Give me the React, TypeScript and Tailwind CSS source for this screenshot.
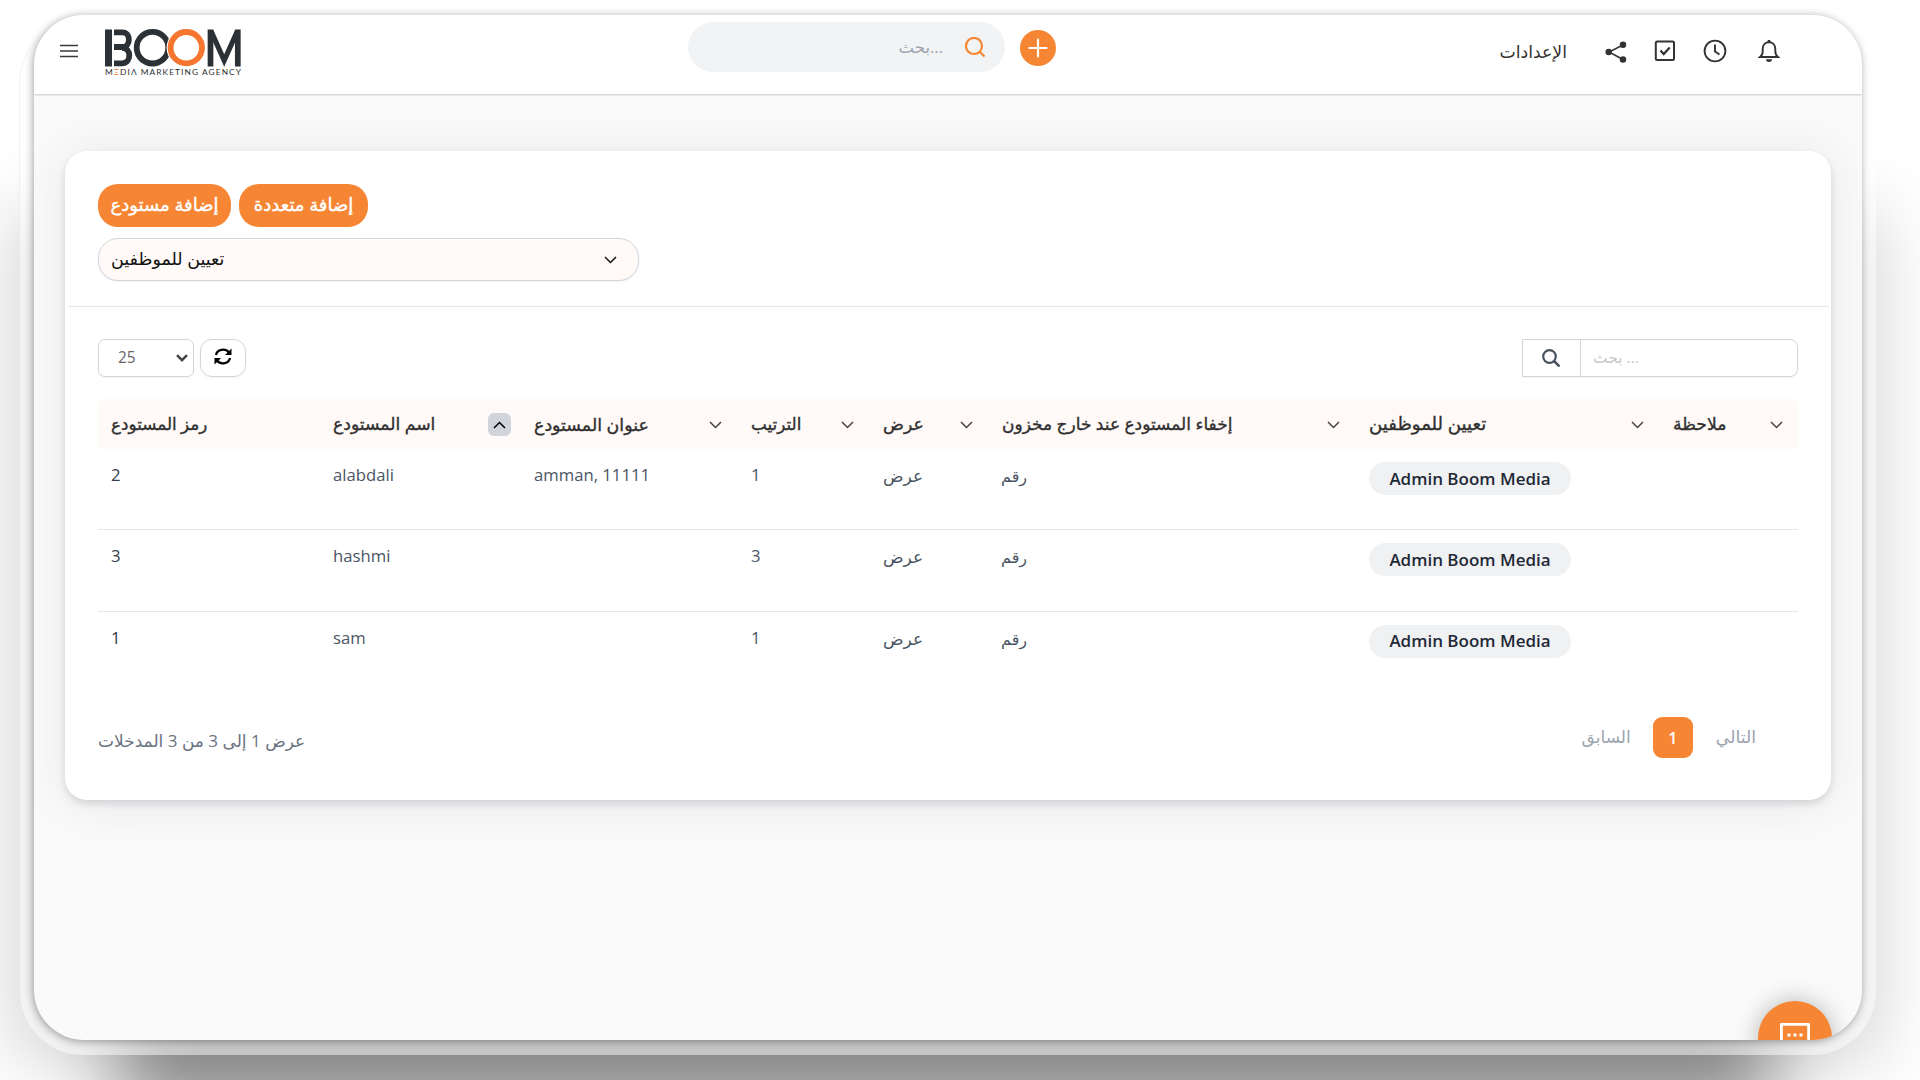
import { useState } from "react";

type Warehouse = {
  code: string;
  name: string;
  address: string;
  order: string;
};

const rows: Warehouse[] = [
  { code: "2", name: "alabdali", address: "amman, 11111", order: "1" },
  { code: "3", name: "hashmi", address: "", order: "3" },
  { code: "1", name: "sam", address: "", order: "1" },
];

const columns = [
  { label: "رمز المستودع", size: "text-[16.800px]" },
  { label: "اسم المستودع", size: "text-[17.200px]" },
  { label: "عنوان المستودع", size: "text-[17.400px]" },
  { label: "الترتيب", size: "text-[16.800px]" },
  { label: "عرض", size: "text-[17.300px]" },
  { label: "إخفاء المستودع عند خارج مخزون", size: "text-[17px]" },
  { label: "تعيين للموظفين", size: "text-[18.100px]" },
  { label: "ملاحظة", size: "text-[17.200px]" },
];

const grid = "grid grid-cols-[222px_201px_217px_132px_119px_367px_304px_1fr] pl-[13px]";

function Chevron({ up = false }: { up?: boolean }) {
  return (
    <svg width="13" height="8" viewBox="0 0 13 8" fill="none" stroke="currentColor" strokeWidth="1.5">
      <path d={up ? "M1 7l5.5-5.5L12 7" : "M1 1l5.5 5.5L12 1"} />
    </svg>
  );
}

function Logo() {
  return (
    <svg width="138" height="48" viewBox="0 0 138 48" fill="none">
      <g stroke="#2b3134">
        <path d="M3.5 0.5v37" strokeWidth="7" />
        <path d="M9 3.300h8.500c8.500 0 8.500 14.700 0 14.700H9M17 18.800c9.700 0 9.700 15.500 0 15.500H9" strokeWidth="5.800" />
        <circle cx="47.500" cy="18.700" r="15.800" strokeWidth="5.800" />
        <path d="M132.800 37.500V0.500" strokeWidth="5.700" />
        <path d="M106 2l13.200 29.500L132.400 2" strokeWidth="5.200" />
      </g>
      <circle cx="81.300" cy="18.700" r="19.700" fill="#fff" />
      <circle cx="81.300" cy="18.700" r="15.700" stroke="#f6762f" strokeWidth="5.800" />
      <path d="M105.500 37.500V0.500" stroke="#2b3134" strokeWidth="5.700" />
      <text x="0" y="45.700" fontSize="8.400" fill="#2b3134" fontFamily="Lato" textLength="136">
        M<tspan fill="#f6762f">Ξ</tspan>DIΛ MARKETING AGENCY
      </text>
    </svg>
  );
}

export default function App() {
  const [pageSize] = useState(25);

  return (
    <div className="relative h-[1080px] w-[1920px] overflow-hidden bg-white pt-[15px] pl-[34px] font-['Open_Sans','DejaVu_Sans',sans-serif] text-[16.700px] text-[#4b5563]">
      {/* soft floor shadows and the translucent bezel round the window */}
      <div className="absolute top-[210px] left-[12px] h-[850px] w-[1868px] bg-black/17 blur-[36px]" />
      <div className="absolute top-[400px] left-[118px] h-[720px] w-[1654px] bg-black/40 blur-[38px]" />
      <div className="absolute top-[20px] left-[19px] h-[1035px] w-[1857px] rounded-[64px] border-l border-black/5 bg-white/50" />

      <div className="relative flex h-[1025px] w-[1828px] flex-col overflow-hidden rounded-[50px] bg-[#fafafa] shadow-[-1px_1px_9px_rgba(0,0,0,0.36)]">
        <header className="relative z-10 flex h-[79px] shrink-0 items-start bg-white shadow-[0_1px_2px_rgba(0,0,0,0.2)]">
          <svg className="mt-[29px] ml-[26px]" width="18" height="14" fill="none" stroke="#3a3a3a" strokeWidth="1.3">
            <path d="M0 1.500h18M0 7h18M0 12.500h18" />
          </svg>
          <div className="mt-[14px] ml-[27px]">
            <Logo />
          </div>

          <div className="mt-[7px] ml-[445px] flex h-[50px] w-[317px] items-center justify-end rounded-full bg-[#f2f3f5] pr-[20px]">
            <span dir="ltr" className="mr-[22px] text-[16.500px] text-[#9ca3af]">بحث...</span>
            <svg width="20" height="20" viewBox="0 0 20 20" fill="none" stroke="#f68633" strokeWidth="2.2">
              <circle cx="9" cy="9" r="8" />
              <path d="M14.500 14.500l5 5" />
            </svg>
          </div>
          <button className="mt-[15px] ml-[15px] flex size-9 items-center justify-center rounded-full bg-[#f68633]">
            <svg width="20" height="20" stroke="#fff" strokeWidth="2.200" strokeLinecap="round">
              <path d="M10 1.500v17M1.500 10h17" />
            </svg>
          </button>

          <div className="mt-[24px] ml-auto flex h-[26px] items-center pr-[82px] text-[#333]">
            <span className="text-[17.300px]">الإعدادات</span>
            <svg className="ml-[38px]" width="22" height="22" viewBox="0 0 22 22" fill="#333" stroke="#333" strokeWidth="1.500">
              <path d="M18 4L4 11l14 7.500" fill="none" />
              <circle cx="18" cy="3.700" r="2.500" />
              <circle cx="3.700" cy="11" r="2.500" />
              <circle cx="18" cy="18.500" r="2.500" />
            </svg>
            <svg className="mb-[2px] ml-[27px]" width="22" height="22" viewBox="0 0 22 22" fill="none" stroke="#333" strokeWidth="2">
              <rect x="1.800" y="1.500" width="18.200" height="18.500" rx="1.500" />
              <path d="M6.500 10.500l3.200 3.500 6-6.500" strokeWidth="2.200" />
            </svg>
            <svg className="mb-[2px] ml-[27px]" width="24" height="24" viewBox="0 0 24 24" fill="none" stroke="#333" strokeWidth="1.900">
              <circle cx="12" cy="12" r="10.400" />
              <path d="M12 5.500v7l4.500 3" />
            </svg>
            <svg className="mb-[2px] ml-[31px]" width="22" height="24" viewBox="0 0 22 24" fill="none" stroke="#333" strokeWidth="1.900">
              <path d="M2 18c2-1.500 2.700-3 2.700-5.500V10c0-4 2.500-6.800 6.300-6.800s6.300 2.800 6.300 6.800v2.500c0 2.500.7 4 2.700 5.500z" />
              <path d="M11 3.200V1" strokeWidth="2.600" />
              <path d="M8 20.300h6a3 2.700 0 0 1-6 0z" fill="#333" stroke="none" />
            </svg>
          </div>
        </header>

        <main className="mt-[57px] ml-[31px] flex h-[649px] w-[1766px] shrink-0 flex-col rounded-[22px] bg-white shadow-[0_4px_8px_-1px_rgba(40,40,60,0.17),0_3px_50px_rgba(40,40,60,0.09)]">
          <div className="mt-[33px] flex gap-2 pl-[33px] text-[18px] text-white [-webkit-text-stroke:0.4px]">
            <button className="h-[43px] w-[133px] rounded-[20px] bg-[#f68633] pb-[3px]">إضافة مستودع</button>
            <button className="h-[43px] w-[129px] rounded-[20px] bg-[#f68633] pb-[3px]">إضافة متعددة</button>
          </div>
          <div className="mt-[11px] ml-[33px] flex h-[43px] w-[541px] items-center justify-between rounded-[20px] border border-gray-300 bg-[#fff9f7] pr-[21px] pl-[12px] text-[#111] shadow-xs">
            <span className="pb-[3px] text-[17.500px]">تعيين للموظفين</span>
            <Chevron />
          </div>
          <div className="mr-[2px] ml-[3px] mt-[25px] h-px shrink-0 bg-gray-200" />

          <div className="mt-[32px] flex pr-[33px] pl-[33px]">
            <button className="flex h-[38px] w-[96px] items-center justify-between rounded-[7px] border border-gray-300 pr-[5px] pl-[19px] text-[15.500px] text-[#666] shadow-xs">
              {pageSize}
              <svg width="12" height="8" viewBox="0 0 12 8" fill="none" stroke="#444" strokeWidth="2.500">
                <path d="M1 1.200l5 5 5-5" />
              </svg>
            </button>
            <button className="ml-[6px] flex h-[38px] w-[46px] items-center justify-center rounded-[12px] border border-gray-300 pb-[3px] shadow-xs">
              <svg width="18" height="17" viewBox="0 0 18 17" fill="none" stroke="#000" strokeWidth="2.200">
                <path d="M2 7c1-5.500 9-7.500 13-2.500M16 10c-1 5.500-9 7.500-13 2.500" />
                <path d="M17.500 0.500v6.500h-6.500zM0.500 16.500v-6.500h6.500z" fill="#000" stroke="none" />
              </svg>
            </button>
            <div className="ml-auto flex h-[38px] w-[276px] rounded-r-[8px] border border-gray-300 shadow-xs">
              <div className="flex w-[58px] items-center justify-center border-r border-gray-300 pr-[1px]">
                <svg width="18" height="18" viewBox="0 0 18 18" fill="none" stroke="#475160" strokeWidth="2.200">
                  <circle cx="7.500" cy="7.500" r="6.300" />
                  <path d="M12 12l5.500 5.500" strokeWidth="2.500" />
                </svg>
              </div>
              <span dir="ltr" className="flex items-center pb-[1px] pl-[12px] text-[15.500px] text-[#c6c6c6]">بحث ...</span>
            </div>
          </div>

          <div className="mt-[22px] mr-[33px] ml-[33px]">
            <div className={`${grid} h-[50px] items-center rounded-t-[8px] bg-[#fff9f7] text-[#2f2f2f]`}>
              {columns.map(({ label, size }, i) => (
                <div key={label} className={`flex items-center justify-between ${i === 7 ? "pr-[15px]" : i === 1 ? "pr-[23px]" : "pr-[29px]"}`}>
                  <span className={`${size} whitespace-nowrap [-webkit-text-stroke:0.35px]`}>{label}</span>
                  {i === 1 && (
                    <span className="mt-[2px] flex h-[23px] w-[23px] items-center justify-center rounded-[6px] bg-[#d1d5db] text-black">
                      <Chevron up />
                    </span>
                  )}
                  {i > 1 && (
                    <span className="mt-[2px] text-[#444]">
                      <Chevron />
                    </span>
                  )}
                </div>
              ))}
            </div>
            {rows.map((r) => (
              <div key={r.name} className={`${grid} h-[81.400px] border-b border-gray-200 pt-[13px] leading-[26px] last:border-0`}>
                <span className="text-[#333b47]">{r.code}</span>
                <span>{r.name}</span>
                <span>{r.address}</span>
                <span>{r.order}</span>
                <span className="pt-[1px] text-[17px]">عرض</span>
                <span className="-ml-px pt-[1px] text-[16px]">رقم</span>
                <span>
                  <span className="flex h-[33px] w-[202px] items-center justify-center rounded-full bg-[#f0f1f3] text-[17px] font-semibold text-[#1f2937]">
                    Admin Boom Media
                  </span>
                </span>
              </div>
            ))}
          </div>

          <div className="mt-[24px] flex items-start pr-[75px] pl-[33px] text-[#6b7280]">
            <span dir="rtl" className="mt-[11px] text-[17px]">عرض 1 إلى 3 من 3 المدخلات</span>
            <div className="ml-auto flex h-[41px] items-center text-[17.300px] text-[#9ca3af]">
              <span className="pb-[2px] text-[17px]">السابق</span>
              <span className="mr-[23px] ml-[22px] flex h-[41px] w-[40px] items-center justify-center rounded-[9px] bg-[#f68633] text-[16px] font-semibold text-white">1</span>
              <span className="pb-[1px]">التالي</span>
            </div>
          </div>
        </main>

        <button className="absolute top-[986px] left-[1724px] flex size-[74px] justify-center rounded-full bg-[#f68633] pt-[22px] shadow-[0_0_24px_rgba(0,0,0,0.28)]">
          <svg width="30" height="30" viewBox="0 0 30 30" fill="none" stroke="#fff" strokeWidth="2.800">
            <path d="M1.400 30V1.400h27.200V30" strokeLinejoin="round" />
            <path d="M7.500 12h3M13.500 12h3M19.500 12h3" strokeWidth="3" />
          </svg>
        </button>
      </div>
    </div>
  );
}
